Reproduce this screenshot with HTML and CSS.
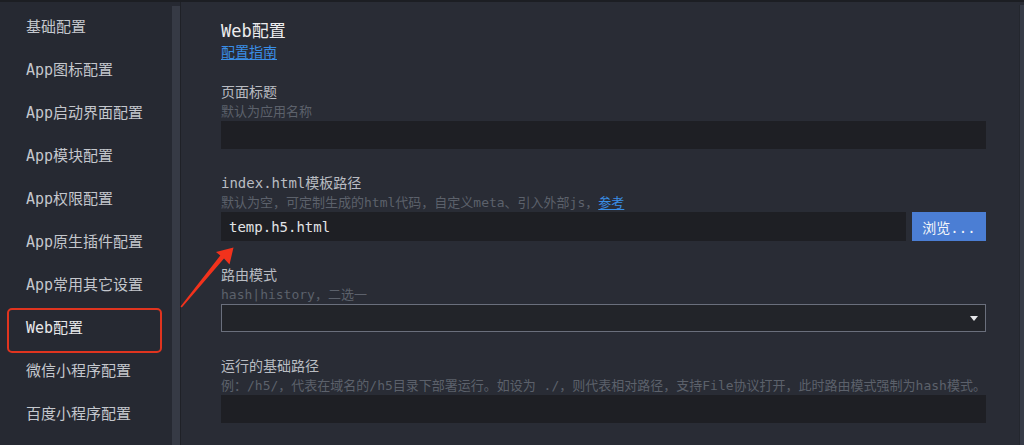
FILE: index.html
```html
<!DOCTYPE html>
<html lang="zh-CN">
<head>
<meta charset="utf-8">
<title>Web配置</title>
<link rel="stylesheet" href="styles.css">
</head>
<body>
<div class="app">
  <nav class="sidebar">
    <ul class="menu">
      <li class="menu-item">基础配置</li>
      <li class="menu-item">App图标配置</li>
      <li class="menu-item">App启动界面配置</li>
      <li class="menu-item">App模块配置</li>
      <li class="menu-item">App权限配置</li>
      <li class="menu-item">App原生插件配置</li>
      <li class="menu-item">App常用其它设置</li>
      <li class="menu-item is-marked">Web配置</li>
      <li class="menu-item">微信小程序配置</li>
      <li class="menu-item">百度小程序配置</li>
    </ul>
  </nav>
  <div class="side-track"><div class="side-thumb"></div></div>
  <main class="content">
    <h1 class="title">Web配置</h1>
    <a class="link guide" href="#">配置指南</a>

    <section class="field">
      <div class="label">页面标题</div>
      <div class="desc">默认为应用名称</div>
      <input class="input" type="text" value="">
    </section>

    <section class="field">
      <div class="label">index.html模板路径</div>
      <div class="desc">默认为空，可定制生成的html代码，自定义meta、引入外部js，<a class="link" href="#">参考</a></div>
      <div class="input-row">
        <input class="input grow" type="text" value="temp.h5.html">
        <button class="btn" type="button">浏览...</button>
      </div>
    </section>

    <section class="field">
      <div class="label">路由模式</div>
      <div class="desc">hash|history，二选一</div>
      <div class="select">
        <span class="select-arrow"></span>
      </div>
    </section>

    <section class="field">
      <div class="label">运行的基础路径</div>
      <div class="desc">例：/h5/，代表在域名的/h5目录下部署运行。如设为 ./，则代表相对路径，支持File协议打开，此时路由模式强制为hash模式。</div>
      <input class="input" type="text" value="">
    </section>
  </main>
  <div class="main-track"></div>

  <svg class="annot-arrow" width="70" height="70" viewBox="0 0 70 70" aria-hidden="true">
    <polygon points="5.5,63.5 45.3,12.6 41,9 58.5,4.5 54.5,21.5 49,15.6 6.8,64.6" fill="#f2321c"/>
  </svg>
</div>
</body>
</html>
```

FILE: styles.css
```css
* { box-sizing: border-box; }

html, body {
  margin: 0;
  padding: 0;
  height: 445px;
  overflow: hidden;
  background: #282b34;
}

body {
  font-family: "DejaVu Sans Mono", "Noto Sans CJK SC", monospace;
}

.app {
  position: relative;
  display: flex;
  height: 445px;
  border-top: 2px solid #1c1e23;
}

/* sidebar */
.sidebar {
  width: 172px;
  flex: none;
  background: #262932;
}

.menu {
  list-style: none;
  margin: 0;
  padding: 4px 0 0 0;
}

.menu-item {
  position: relative;
  height: 43px;
  line-height: 43px;
  padding-left: 26px;
  font-size: 15px;
  color: #c4c7cd;
  white-space: nowrap;
}

.menu-item.is-marked {
  color: #e8e8ea;
}

.menu-item.is-marked::after {
  content: "";
  position: absolute;
  left: 7px;
  top: 1px;
  width: 151px;
  height: 41px;
  border: 2px solid #e0341f;
  border-radius: 5px;
}

.side-track {
  width: 9px;
  flex: none;
  background: #262932;
  border-right: 1px solid #1f2127;
  padding-top: 4px;
}

.side-thumb {
  height: 100%;
  background: #363a45;
}

/* content */
.content {
  flex: 1;
  min-width: 0;
  padding: 18px 33px 0 40px;
  background: #292c35;
}

.title {
  margin: 0;
  font-size: 17px;
  font-weight: normal;
  line-height: 22px;
  color: #ececee;
}

.link {
  color: #3a8ee6;
  text-decoration: underline;
  text-underline-offset: 2px;
}

.guide {
  display: inline-block;
  font-size: 14px;
  line-height: 20px;
}

.field {
  margin-top: 20px;
}

.field + .field {
  margin-top: 24px;
}

.label {
  font-size: 14px;
  line-height: 20px;
  color: #b9bcc2;
}

.desc {
  font-size: 13px;
  line-height: 19px;
  color: #5c616b;
  white-space: nowrap;
}

.input {
  display: block;
  width: 100%;
  height: 28px;
  margin: 0;
  border: none;
  outline: none;
  background: #1e1f24;
  color: #e2e3e6;
  font-family: "DejaVu Sans Mono", "Noto Sans CJK SC", monospace;
  font-size: 14px;
  padding: 0 8px;
}

.input-row {
  display: flex;
  gap: 6px;
}

.input-row .input {
  height: 29px;
}

.grow {
  flex: 1;
  width: auto;
  min-width: 0;
}

.btn {
  flex: none;
  width: 74px;
  height: 29px;
  margin: 0;
  border: none;
  background: #4b7ed4;
  color: #f4f6fa;
  font-family: "DejaVu Sans Mono", "Noto Sans CJK SC", monospace;
  font-size: 14px;
  padding: 0;
}

.select {
  position: relative;
  height: 28px;
  border: 1px solid #6a6f7c;
  background: #222429;
  display: flex;
  align-items: center;
  justify-content: flex-end;
  padding-right: 7px;
}

.select-arrow {
  width: 0;
  height: 0;
  border-left: 4px solid transparent;
  border-right: 4px solid transparent;
  border-top: 5px solid #e6e7ea;
}

.main-track {
  width: 5px;
  flex: none;
  background: #363b47;
  border-left: 1px solid #24272e;
  margin-top: 3px;
}

.annot-arrow {
  position: absolute;
  left: 175px;
  top: 241px;
}
```
